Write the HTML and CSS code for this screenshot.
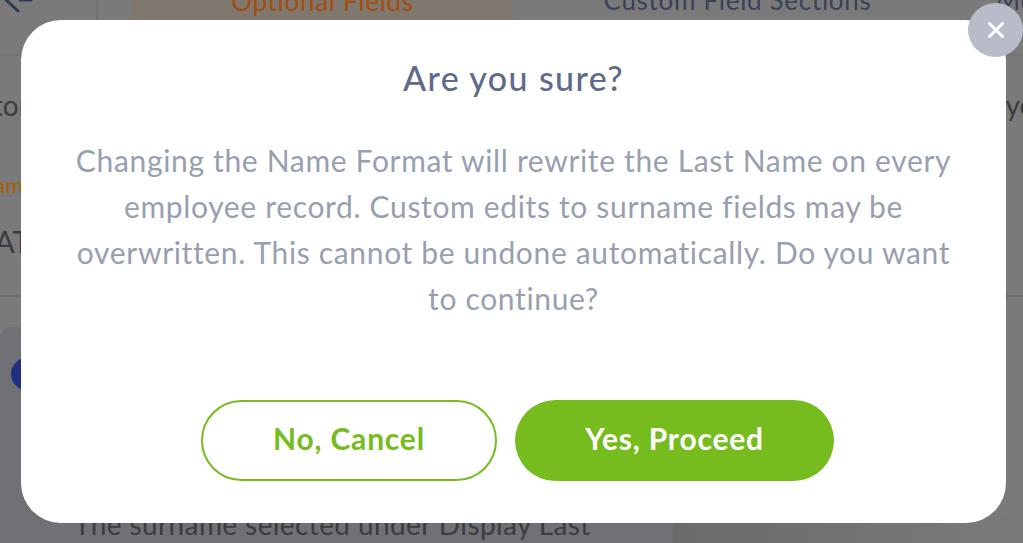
FILE: index.html
```html
<!DOCTYPE html>
<html lang="en">
<head>
  <meta charset="UTF-8" />
  <meta name="viewport" content="width=device-width, initial-scale=1.0" />
  <title>Name Format</title>
  <link rel="stylesheet" href="styles.css">
</head>
<body>
  <div class="page">
    <div class="tabs">
      <div class="tab-back">
        <svg class="back-icon" width="40" height="40" viewBox="0 0 40 40">
          <path d="M5 -1 L18 11" />
          <path d="M20 0 L31 0" />
        </svg>
      </div>
      <div class="tab tab-active"><span>Optional Fields</span></div>
      <div class="tab tab-custom"><span>Custom Field Sections</span></div>
      <div class="tab tab-more"><span>More</span></div>
    </div>

    <div class="row">
      <span>Name Editor</span>
      <span>Employee</span>
    </div>

    <div class="field">
      <div class="field-label">Surname</div>
      <div class="field-value">LATEST</div>
    </div>

    <div class="lower">
      <div class="note">
        <div class="note-dot"></div>
        <p class="note-text">The surname selected under Display Last</p>
      </div>
      <div class="lower-side"></div>
    </div>
  </div>

  <div class="overlay">
    <div class="modal">
      <button class="close" aria-label="Close">
        <svg width="18" height="18" viewBox="0 0 18 18">
          <path d="M2.5 2.5 L15.5 15.5 M15.5 2.5 L2.5 15.5" />
        </svg>
      </button>
      <h2 class="modal-title">Are you sure?</h2>
      <p class="modal-text">Changing the Name Format will rewrite the Last Name on every employee record. Custom edits to surname fields may be overwritten. This cannot be undone automatically. Do you want to continue?</p>
      <div class="modal-actions">
        <button class="btn btn-outline">No, Cancel</button>
        <button class="btn btn-solid">Yes, Proceed</button>
      </div>
    </div>
  </div>
</body>
</html>
```

FILE: styles.css
```css
html, body {
  margin: 0;
  padding: 0;
  height: 100%;
  overflow: hidden;
}
body {
  font-family: "Lato", "Noto Sans", sans-serif;
  position: relative;
}
.page {
  height: 543px;
  overflow: hidden;
  background-color: #bcbcbc;
  color: #5b5d63;
}
.tabs {
  display: flex;
  height: 56px;
  border-bottom: 2px solid #b0b0b0;
  box-sizing: border-box;
}
.tab-back {
  width: 98px;
  border-right: 2px solid #aeaeae;
  box-sizing: border-box;
  flex: none;
}
.back-icon {
  display: block;
  overflow: visible;
  fill: none;
  stroke: #445a7e;
  stroke-width: 3;
  stroke-linecap: round;
}
.tab {
  flex: none;
  text-align: center;
  font-size: 26px;
  line-height: 30px;
  letter-spacing: 0.7px;
  margin-top: -15px;
  color: #59658a;
}
.tab-active {
  width: 381px;
  margin-left: 34px;
  padding-top: 15px;
  line-height: 2px;
  background-color: #c2b8aa;
  border-radius: 0 0 16px 16px;
  color: #ff7619;
}
.tab-custom {
  width: 449px;
  box-sizing: border-box;
}
.tab-more {
  margin-left: 34px;
}
.row {
  display: flex;
  justify-content: space-between;
  padding-top: 32px;
  font-size: 28px;
  line-height: 34px;
  margin-left: -125px;
  margin-right: -26px;
}
.field {
  margin-top: 50px;
  height: 123px;
  border-bottom: 2px solid #aaa;
}
.field-label {
  margin-left: -50px;
  color: #ff9300;
  font-size: 22px;
  line-height: 26px;
}
.field-value {
  margin-top: 25px;
  font-size: 30px;
  line-height: 36px;
  margin-left: -21px;
}
.lower {
  display: flex;
  margin-top: 30px;
  height: 216px;
}
.note {
  width: 673px;
  box-sizing: border-box;
  background-color: #acaeb4;
  border-radius: 12px 0 0 0;
  padding: 30px 0 0 11px;
}
.lower-side {
  flex: 1;
  background: linear-gradient(to right, #a4a4a4, #bcbcbc);
  margin-top: 190px;
}
.note-dot {
  width: 36px;
  height: 34px;
  border-radius: 50%;
  background-color: #3549c5;
}
.note-text {
  margin: 116px 0 0 63px;
  font-size: 28px;
  line-height: 34px;
  letter-spacing: 0.4px;
  white-space: nowrap;
}
.overlay {
  position: absolute;
  top: 0;
  right: 0;
  bottom: 0;
  left: 0;
  background-color: rgba(0, 0, 0, 0.35);
  display: flex;
  align-items: center;
  padding-left: 21px;
}
.modal {
  position: relative;
  width: 985px;
  height: 503px;
  box-sizing: border-box;
  background-color: #fff;
  border-radius: 40px;
  padding: 33px 48px 42px;
  display: flex;
  flex-direction: column;
  text-align: center;
}
.close {
  position: absolute;
  top: -17px;
  right: -17px;
  width: 55px;
  height: 54px;
  padding: 0;
  border: none;
  border-radius: 50%;
  background-color: #b8bcc8;
  display: flex;
  align-items: center;
  justify-content: center;
}
.close path {
  stroke: #fff;
  stroke-width: 3;
  stroke-linecap: round;
  fill: none;
}
.modal-title {
  margin: 0;
  font-size: 34px;
  line-height: 50px;
  font-weight: 500;
  letter-spacing: 1.4px;
  color: #5f6b8a;
}
.modal-text {
  margin: 34px 0 0;
  font-size: 30px;
  line-height: 46px;
  letter-spacing: 0.66px;
  color: #98a0b0;
}
.modal-actions {
  margin-top: auto;
  display: flex;
  gap: 18px;
  padding-left: 132px;
}
.btn {
  height: 81px;
  border-radius: 41px;
  padding: 0 0 5px;
  font-family: inherit;
  font-size: 30px;
  font-weight: 700;
  letter-spacing: 0.8px;
  box-sizing: border-box;
}
.btn-outline {
  width: 296px;
  background-color: #fff;
  border: 2px solid #76bc1e;
  color: #76bc1e;
}
.btn-solid {
  width: 319px;
  background-color: #76bc1e;
  border: none;
  color: #fff;
}
```
